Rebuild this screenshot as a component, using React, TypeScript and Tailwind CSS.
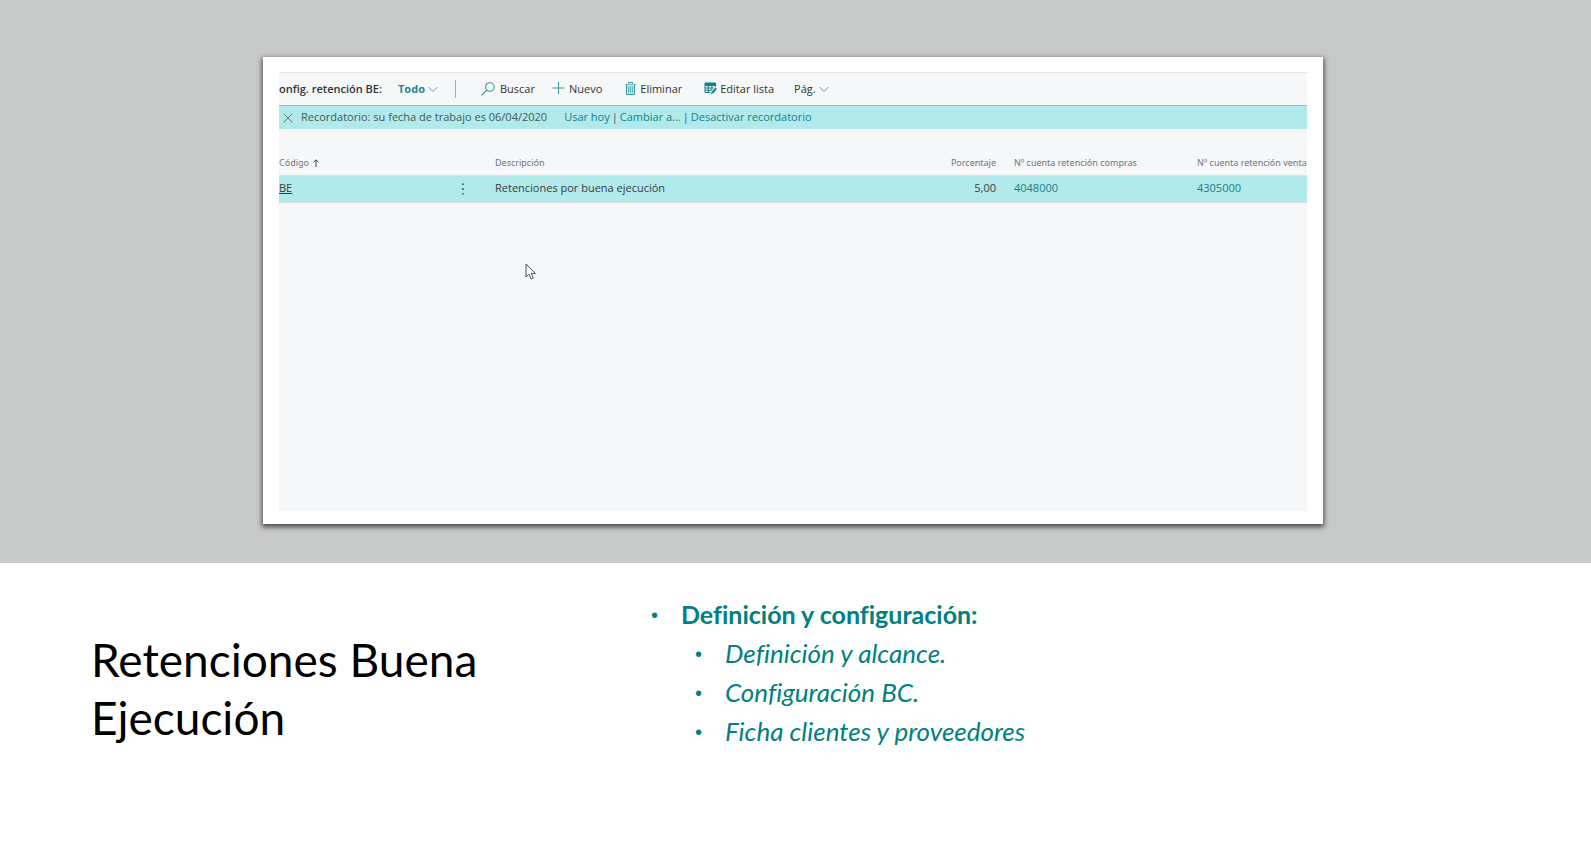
import { ReactNode } from 'react';

const actionClass = 'flex shrink-0 items-center whitespace-nowrap text-[#333]';

function ChevronIcon() {
  return (
    <svg className="h-3 w-3" viewBox="0 0 12 12" fill="none" stroke="#8a9096" strokeWidth="1">
      <path d="M1.5 4 L6 8.5 L10.5 4" />
    </svg>
  );
}

function SearchIcon() {
  return (
    <svg className="mr-0.5 h-4 w-4" viewBox="0 0 16 16" fill="none" stroke="#3b9ba1" strokeWidth="1.1">
      <circle cx="9.9" cy="6" r="4.3" />
      <path d="M6.8 9 L1.5 14.4" />
    </svg>
  );
}

function PlusIcon() {
  return (
    <svg className="h-4 w-4" viewBox="0 0 16 16" fill="none" stroke="#3b9ba1" strokeWidth="1.1">
      <path d="M7.5 1 V13 M1.5 7 H13.5" />
    </svg>
  );
}

function TrashIcon() {
  return (
    <svg className="h-4 w-4" viewBox="0 0 16 16" fill="none" stroke="#3b9ba1" strokeWidth="1">
      <path d="M3.5 3.5 H13.5 M6.5 3.3 V1.5 H10.5 V3.3" />
      <path d="M4.5 3.5 V13.5 H12.5 V3.5" fill="#c5e4e6" />
      <path d="M6.6 5.5 V11.5 M8.5 5.5 V11.5 M10.4 5.5 V11.5" strokeWidth="0.8" />
    </svg>
  );
}

function EditListIcon() {
  return (
    <svg className="h-4 w-4" viewBox="0 0 16 16" fill="none" stroke="#0f8288">
      <path d="M3 2 H13.5 V4.5 H3 Z" fill="#0f8288" />
      <path d="M3 4.5 V11.5 H8 M3 7 H12.5 M3 9.2 H10 M6.4 4.5 V11.5 M9.9 4.5 V9.5 M13.5 4.5 V6" />
      <path d="M8.2 13.9 L9.1 10.9 L13.4 6.2 L15.4 7.9 L11.2 12.7 Z" fill="#0f8288" stroke="#f5f7f9" strokeWidth="0.8" />
    </svg>
  );
}

function Action({ icon, children }: { icon: ReactNode; children: ReactNode }) {
  return (
    <button type="button" className={`${actionClass} gap-0.5`}>
      {icon}
      {children}
    </button>
  );
}

function Toolbar() {
  return (
    <div className="flex h-[34px] items-center border-t border-b border-t-[#e6e8ea] border-b-[#a9b4b7] text-[11px]">
      <h2 className="w-[119px] shrink-0 font-semibold whitespace-nowrap text-[#333]">onfig. retención BE:</h2>
      <button type="button" className="flex items-center gap-0.5 font-bold text-[#1a8a90]">
        Todo
        <ChevronIcon />
      </button>
      <div className="mr-6 ml-4 h-[18px] w-px bg-[#a8adb3]" />
      <div className="flex gap-4">
        <Action icon={<SearchIcon />}>Buscar</Action>
        <Action icon={<PlusIcon />}>Nuevo</Action>
      </div>
      <div className="ml-5 flex gap-5">
        <Action icon={<TrashIcon />}>Eliminar</Action>
        <Action icon={<EditListIcon />}>Editar lista</Action>
        <button type="button" className={`${actionClass} gap-0.5`}>
          Pág.
          <ChevronIcon />
        </button>
      </div>
    </div>
  );
}

function Reminder() {
  return (
    <div className="flex h-[23px] items-center bg-[#b2eaec] text-[11px] whitespace-nowrap text-[#40595c]">
      <button type="button" aria-label="Cerrar" className="mr-2 ml-1">
        <svg className="h-[10px] w-[10px]" viewBox="0 0 10 10" stroke="#5f797c" strokeWidth="1">
          <path d="M0.5 0.5 L9.5 9.5 M9.5 0.5 L0.5 9.5" />
        </svg>
      </button>
      <p>Recordatorio: su fecha de trabajo es 06/04/2020</p>
      <div className="ml-[17px] flex gap-0.5 text-[#14808a]">
        <a href="#">Usar hoy</a>
        <span className="text-[#40595c]">|</span>
        <a href="#">Cambiar a...</a>
        <span className="text-[#40595c]">|</span>
        <a href="#">Desactivar recordatorio</a>
      </div>
    </div>
  );
}

function RetentionTable() {
  return (
    <table className="mt-[22px] w-full table-fixed text-left whitespace-nowrap">
      <thead className="font-['Noto_Sans',sans-serif] text-[9px] text-[#70757d]">
        <tr className="h-6 border-b border-[#dcdfe1]">
          <th className="w-[172px] font-normal">
            <span className="flex items-center gap-1">
              Código
              <svg className="h-2 w-1.5" viewBox="0 0 6 8" fill="none" stroke="#444">
                <path d="M3 8 V1 M0.5 3.2 L3 0.8 L5.5 3.2" />
              </svg>
            </span>
          </th>
          <th className="w-11" aria-label="Acciones" />
          <th className="font-normal">Descripción</th>
          <th className="w-[100px] text-right font-normal">Porcentaje</th>
          <th className="w-[201px] pl-[18px] font-normal">Nº cuenta retención compras</th>
          <th className="w-[110px] overflow-hidden font-normal">Nº cuenta retención ventas</th>
        </tr>
      </thead>
      <tbody className="text-[11px] text-[#333f41]">
        <tr className="h-[27px] border-b border-[#dcdfe1] bg-[#b2eaec]">
          <td><a href="#" className="underline">BE</a></td>
          <td>
            <button type="button" aria-label="Más opciones" className="flex w-6 justify-center">
              <svg className="h-3 w-1" viewBox="0 0 4 12" fill="#3f4f51">
                <circle cx="2" cy="1.2" r="0.9" />
                <circle cx="2" cy="6" r="0.9" />
                <circle cx="2" cy="10.8" r="0.9" />
              </svg>
            </button>
          </td>
          <td>Retenciones por buena ejecución</td>
          <td className="text-right">5,00</td>
          <td className="pl-[18px]"><a href="#" className="text-[#14808a]">4048000</a></td>
          <td><a href="#" className="text-[#14808a]">4305000</a></td>
        </tr>
      </tbody>
    </table>
  );
}

function Bullet() {
  return <span className="w-[30px] shrink-0 font-['Liberation_Sans',sans-serif] text-xl font-normal not-italic">•</span>;
}

export default function App() {
  return (
    <main className="min-h-screen bg-white font-['Lato',sans-serif]">
      <section className="bg-[#c8cac9] pt-[57px] pr-[268px] pb-[39px] pl-[263px]">
        <div className="border border-white bg-white px-[15px] pt-[14px] pb-3 shadow-[0_2px_5px_1px_rgba(0,0,0,0.65)]">
          <div className="relative h-[439px] overflow-hidden bg-[#f5f7f9] font-['Open_Sans',sans-serif]">
            <Toolbar />
            <Reminder />
            <RetentionTable />
            <svg className="absolute top-[191px] left-[246px] h-[18px] w-3" viewBox="0 0 12 18" fill="#fff" stroke="#4a4d55" strokeWidth="1">
              <path d="M1 1 V14 L4 11.2 L6.2 16 L8.3 15 L6.2 10.4 H10.3 Z" />
            </svg>
          </div>
        </div>
      </section>

      <section className="flex pt-8 pl-[91px]">
        <h1 className="w-[560px] pt-9 text-[46px] leading-[58px] text-black">
          Retenciones Buena
          <br />
          Ejecución
        </h1>
        <ul className="text-[25px] leading-[39px] text-[#008080] [font-variant-ligatures:none]">
          <li className="flex items-center font-bold">
            <Bullet />
            Definición y configuración:
          </li>
          <li>
            <ul className="pl-11 text-[26px] italic">
              <li className="flex items-center"><Bullet />Definición y alcance.</li>
              <li className="flex items-center"><Bullet />Configuración BC.</li>
              <li className="flex items-center"><Bullet />Ficha clientes y proveedores</li>
            </ul>
          </li>
        </ul>
      </section>
    </main>
  );
}
